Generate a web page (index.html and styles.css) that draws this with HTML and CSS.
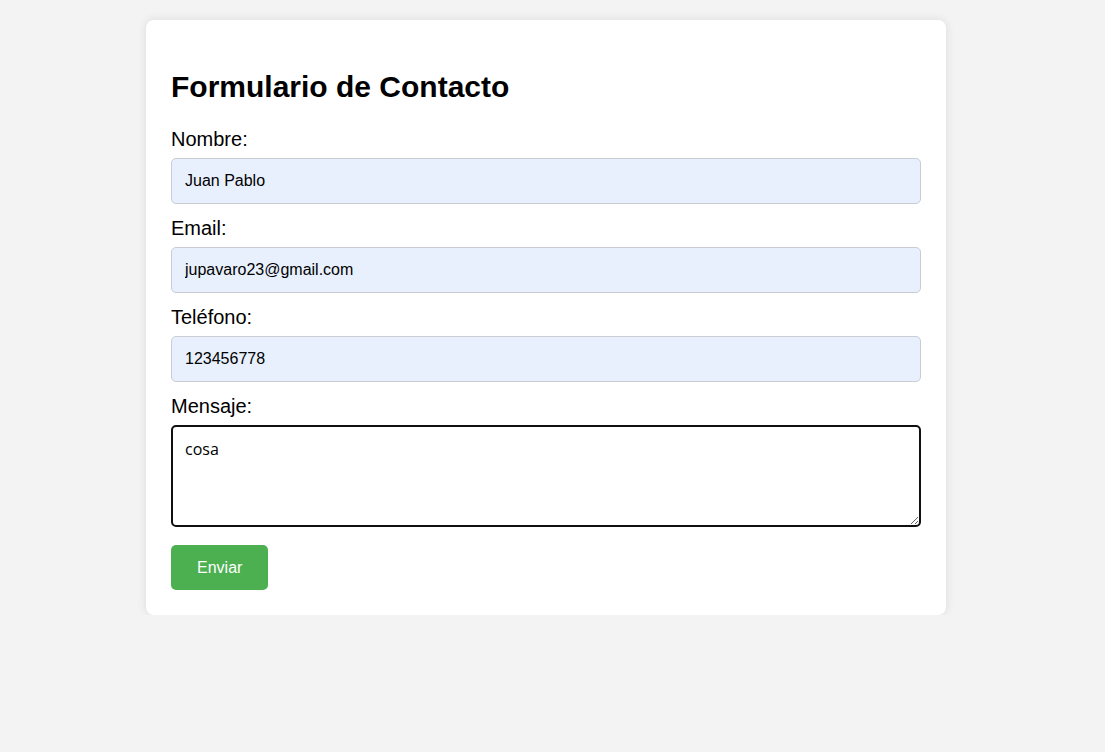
FILE: index.html
```html
<!DOCTYPE html>
<html lang="es">
<head>
<meta charset="utf-8">
<title>Formulario de Contacto</title>
<link rel="stylesheet" href="styles.css">
</head>
<body>
  <div class="card">
    <h2 class="title">Formulario de Contacto</h2>
    <form class="form">
      <label class="label" for="nombre">Nombre:</label>
      <input class="field field-filled" id="nombre" type="text" value="Juan Pablo">
      <label class="label" for="email">Email:</label>
      <input class="field field-filled" id="email" type="email" value="jupavaro23@gmail.com">
      <label class="label" for="telefono">Teléfono:</label>
      <input class="field field-filled" id="telefono" type="tel" value="123456778">
      <label class="label" for="mensaje">Mensaje:</label>
      <textarea class="message" id="mensaje">cosa</textarea>
      <button class="submit" type="button">Enviar</button>
    </form>
  </div>
</body>
</html>
```

FILE: styles.css
```css
html, body {
  margin: 0;
  background: #f3f3f3;
}

body {
  padding: 20px 13px 0 0;
  font-family: "Liberation Sans", Arial, sans-serif;
  color: #000;
}

.card {
  width: 800px;
  margin: 0 auto;
  box-sizing: border-box;
  padding: 25px;
  background: #fff;
  border-radius: 8px;
  box-shadow: 0 0 10px rgba(0, 0, 0, 0.1);
}

.title {
  font-size: 30px;
  font-weight: bold;
  margin: 25px 0 24px;
  line-height: 34px;
}

.form {
  display: flex;
  flex-direction: column;
  align-items: flex-start;
}

.label {
  display: block;
  font-size: 20px;
  line-height: 23px;
  margin-bottom: 7px;
}

.field {
  display: block;
  width: 100%;
  height: 46px;
  box-sizing: border-box;
  padding: 12px 13px;
  margin: 0 0 13px;
  border: 1px solid #c9ccd3;
  border-radius: 5px;
  font-family: "Liberation Sans", Arial, sans-serif;
  font-size: 16px;
  line-height: 20px;
  color: #000;
  outline: none;
}

.field-filled {
  background: #e8f0fe;
}

.message {
  display: block;
  width: 100%;
  height: 102px;
  box-sizing: border-box;
  padding: 11px 12px;
  margin: 0 0 18px;
  border: 2px solid #101010;
  border-radius: 5px;
  background: #fff;
  font-family: "Open Sans", "Noto Sans", sans-serif;
  font-size: 16px;
  line-height: 22px;
  color: #000;
  outline: none;
}

.submit {
  height: 45px;
  padding: 0 26px;
  border: none;
  border-radius: 5px;
  background: #4caf50;
  color: #fff;
  font-family: "Liberation Sans", Arial, sans-serif;
  font-size: 16px;
  cursor: pointer;
}
```
